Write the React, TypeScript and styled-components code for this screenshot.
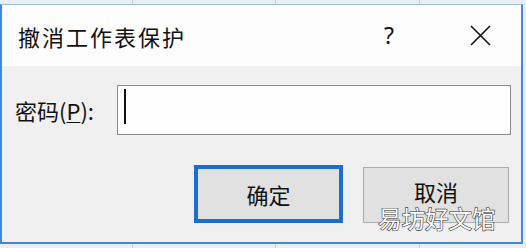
import React from "react";
import styled, { createGlobalStyle } from "styled-components";

const Global = createGlobalStyle`
  html, body { margin: 0; padding: 0; }
  body {
    width: 526px;
    height: 248px;
    overflow: hidden;
    background: #e6ecf2;
    font-family: "Noto Sans CJK SC", "Noto Sans", sans-serif;
  }
`;

const Backdrop = styled.div`
  position: relative;
  width: 526px;
  height: 248px;
  padding-top: 4px;
  box-sizing: border-box;
  background: linear-gradient(to right, transparent 132px, #c9d3dd 132px, #c9d3dd 133px, transparent 133px, transparent 275px, #c9d3dd 275px, #c9d3dd 276px, transparent 276px, transparent 419px, #c9d3dd 419px, #c9d3dd 420px, transparent 420px) #e9eef3;
`;

const Window = styled.div`
  width: 523px;
  height: 240px;
  box-sizing: border-box;
  border-top: 1px solid #9fbbd8;
  border-left: 2px solid #3d8ae0;
  border-right: 2px solid #3d8ae0;
  border-bottom: 2px solid #3f86d4;
  display: flex;
  flex-direction: column;
  background: #f0f0f0;
`;

const TitleBar = styled.div`
  height: 61px;
  flex: none;
  background: #fdfdfd;
  display: flex;
  align-items: center;
  padding-left: 16px;
  padding-right: 30px;
`;

const Title = styled.div`
  flex: 1;
  font-size: 22px;
  letter-spacing: 2px;
  color: #111;
  line-height: 1;
`;

const HelpGlyph = styled.div`
  font-family: "Noto Sans", "DejaVu Sans", sans-serif;
  font-size: 23px;
  color: #111;
  line-height: 1;
  margin-right: 76px;
`;

const CloseIcon = styled.svg`
  width: 21px;
  height: 21px;
  display: block;
`;

const Body = styled.div`
  flex: 1;
  display: flex;
  flex-direction: column;
  padding: 19px 10px 0 13px;
`;

const Row = styled.div`
  display: flex;
  align-items: center;
  gap: 18px;
`;

const Label = styled.label`
  font-size: 22px;
  color: #111;
  width: 84px;
  line-height: 1;
  white-space: nowrap;
  u { text-decoration-thickness: 1px; text-underline-offset: 2px; }
`;

const Input = styled.div`
  position: relative;
  flex: 1;
  height: 50px;
  box-sizing: border-box;
  border: 1px solid #8c8c8c;
  background: #fefefe;
`;

const Caret = styled.span`
  position: absolute;
  left: 6px;
  top: 3px;
  width: 2px;
  height: 35px;
  background: #111;
`;

const Buttons = styled.div`
  display: flex;
  justify-content: flex-end;
  align-items: flex-end;
  gap: 20px;
  margin-top: 30px;
  padding-right: 2px;
`;

const Button = styled.div<{ $focused?: boolean }>`
  position: relative;
  box-sizing: border-box;
  width: ${(p) => (p.$focused ? 149 : 146)}px;
  height: ${(p) => (p.$focused ? 58 : 56)}px;
  background: #e1e1e1;
  border: ${(p) => (p.$focused ? "4px solid #1a6dd2" : "1px solid #adadad")};
  display: flex;
  align-items: center;
  justify-content: center;
  font-size: 22px;
  color: #111;
  line-height: 1;
  padding-bottom: ${(p) => (p.$focused ? 0 : 9)}px;
`;

const Watermark = styled.div`
  position: absolute;
  left: 378px;
  top: 207px;
  font-size: 23.5px;
  line-height: 1;
  color: #fff;
  -webkit-text-stroke: 1.2px #333;
  paint-order: stroke fill;
`;

export default function App() {
  return (
    <>
      <Global />
      <Backdrop>
        <Window>
          <TitleBar>
            <Title>撤消工作表保护</Title>
            <HelpGlyph>?</HelpGlyph>
            <CloseIcon viewBox="0 0 21 21">
              <path d="M1 1 L20 20 M20 1 L1 20" stroke="#111" strokeWidth="1.6" fill="none" />
            </CloseIcon>
          </TitleBar>
          <Body>
            <Row>
              <Label>
                密码(<u>P</u>):
              </Label>
              <Input>
                <Caret />
              </Input>
            </Row>
            <Buttons>
              <Button $focused>确定</Button>
              <Button>取消</Button>
            </Buttons>
          </Body>
        </Window>
        <Watermark>易坊好文馆</Watermark>
      </Backdrop>
    </>
  );
}
